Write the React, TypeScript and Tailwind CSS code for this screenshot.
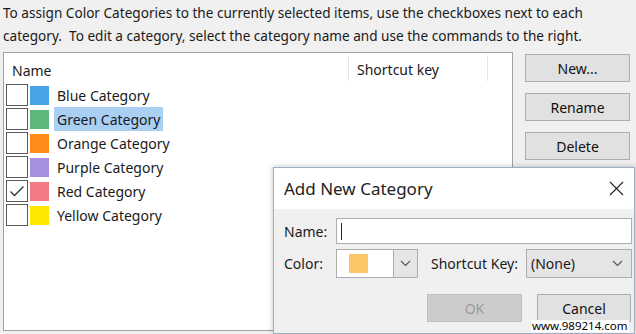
import React from 'react';

const font = { fontFamily: '"Noto Sans", "Open Sans", sans-serif' };

interface Category {
  name: string;
  color: string;
  checked?: boolean;
  selected?: boolean;
}

const categories: Category[] = [
  { name: 'Blue Category', color: 'bg-[#4aa3e6]' },
  { name: 'Green Category', color: 'bg-[#5cb87a]', selected: true },
  { name: 'Orange Category', color: 'bg-[#ff8c1a]' },
  { name: 'Purple Category', color: 'bg-[#a58fde]' },
  { name: 'Red Category', color: 'bg-[#f17a85]', checked: true },
  { name: 'Yellow Category', color: 'bg-[#ffe800]' },
];

const Chevron: React.FC = () => (
  <svg width="11" height="7" viewBox="0 0 11 7" fill="none">
    <path d="M1 1l4.5 4.5L10 1" stroke="#555" strokeWidth="1.1" />
  </svg>
);

const SideButton: React.FC<{ label: string }> = ({ label }) => (
  <button className="w-[105px] h-[28px] bg-[#e1e1e1] border border-[#adadad] text-[14px] text-[#111]">
    {label}
  </button>
);

const App: React.FC = () => {
  return (
    <div
      className="relative w-[636px] h-[334px] overflow-hidden bg-[#f0f0f0] text-[#1a1a1a]"
      style={font}
    >
      <p className="px-[3px] pt-[1px] text-[13.6px] leading-[23px] whitespace-nowrap">
        To assign Color Categories to the currently selected items, use the checkboxes next to each
        <br />
        category.&nbsp; To edit a category, select the category name and use the commands to the right.
      </p>

      <div className="flex mt-[5px]">
        <div className="ml-[3px] w-[510px] h-[279px] bg-white border border-[#a0a0a0]">
          <div className="flex h-[30px] items-center text-[14px]">
            <div className="w-[344px] pl-[8px] pt-[4px]">Name</div>
            <div className="w-[140px] h-[26px] border-l border-r border-[#e5e5e5] pl-[8px] flex items-center pt-[2px]">
              Shortcut key
            </div>
          </div>
          {categories.map((c) => (
            <div key={c.name} className="flex h-[24px] items-center text-[14px]">
              <div className="ml-[2px] w-[22px] h-[22px] border border-[#5a5a5a] bg-white flex items-center justify-center">
                {c.checked && (
                  <svg width="16" height="12" viewBox="0 0 16 12" fill="none">
                    <path d="M1.5 6.5l4 4L14.5 1.5" stroke="#333" strokeWidth="1.3" />
                  </svg>
                )}
              </div>
              <div className={`ml-[2px] w-[19px] h-[19px] ${c.color}`} />
              <div
                className={`ml-[5px] h-[24px] px-[3px] flex items-center ${
                  c.selected ? 'bg-[#a9cff2]' : ''
                }`}
              >
                {c.name}
              </div>
            </div>
          ))}
        </div>

        <div className="ml-[12px] mt-[2px] flex flex-col gap-[11px]">
          <SideButton label="New..." />
          <SideButton label="Rename" />
          <SideButton label="Delete" />
        </div>
      </div>

      <div className="absolute left-[273px] top-[167px] w-[362px] h-[167px] border border-[#9fb0c4] bg-[#f0f0f0] shadow-[0_0_6px_rgba(0,0,0,0.25)]">
        <div className="h-[41px] bg-white flex items-center justify-between pl-[10px] pr-[10px]">
          <span className="text-[17px] text-[#222]">Add New Category</span>
          <svg width="15" height="15" viewBox="0 0 15 15" fill="none">
            <path d="M1 1l13 13M14 1L1 14" stroke="#222" strokeWidth="1.1" />
          </svg>
        </div>

        <div className="pl-[10px] pr-[2px] pt-[9px] text-[14px]">
          <div className="flex items-center h-[26px]">
            <span className="w-[52px]">Name:</span>
            <div className="flex-1 h-[26px] bg-white border border-[#adadad] flex items-center pl-[4px]">
              <div className="w-px h-[17px] bg-[#222]" />
            </div>
          </div>

          <div className="flex items-center h-[29px] mt-[5px]">
            <span className="w-[52px]">Color:</span>
            <div className="w-[82px] h-[29px] bg-white border border-[#adadad] flex">
              <div className="flex-1 flex items-center pl-[12px]">
                <div className="w-[19px] h-[19px] bg-[#fdc768]" />
              </div>
              <div className="w-[24px] bg-[#e5e5e5] border-l border-[#adadad] flex items-center justify-center">
                <Chevron />
              </div>
            </div>
            <span className="ml-[13px] w-[95px]">Shortcut Key:</span>
            <div className="flex-1 h-[29px] bg-[#e5e5e5] border border-[#adadad] flex items-center justify-between pl-[4px] pr-[8px]">
              <span>(None)</span>
              <Chevron />
            </div>
          </div>

          <div className="flex justify-end gap-[15px] mt-[16px] pr-[1px]">
            <button className="w-[95px] h-[28px] bg-[#cccccc] border border-[#bfbfbf] text-[14px] text-[#9a9a9a]">
              OK
            </button>
            <button className="w-[94px] h-[28px] bg-[#e1e1e1] border border-[#adadad] text-[14px] text-[#111]">
              Cancel
            </button>
          </div>
        </div>

        <div className="absolute left-[257px] bottom-[1px] bg-white px-[1px] text-[11.5px] leading-[12px] text-black">
          www.989214.com
        </div>
      </div>
    </div>
  );
};

export default App;
